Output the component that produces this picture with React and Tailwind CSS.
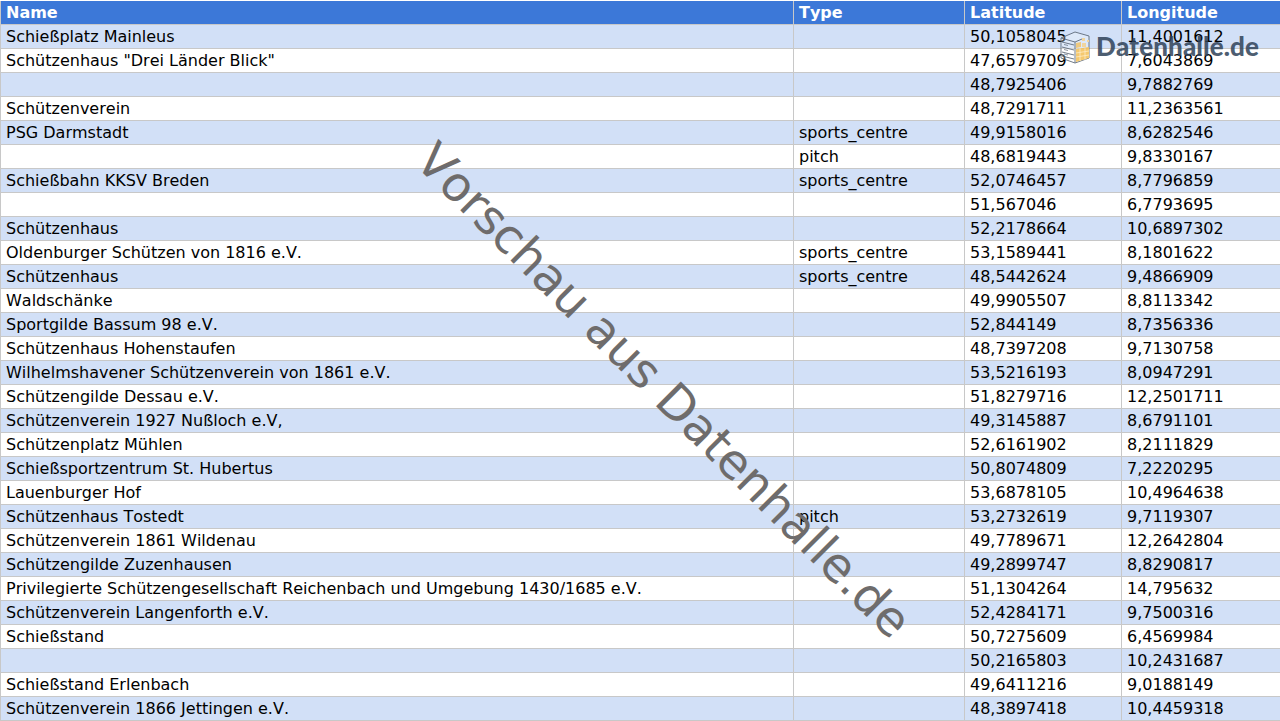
import React from 'react';

const rows = [
  ['Schießplatz Mainleus', '', '50,1058045', '11,4001612'],
  ['Schützenhaus "Drei Länder Blick"', '', '47,6579709', '7,6043869'],
  ['', '', '48,7925406', '9,7882769'],
  ['Schützenverein', '', '48,7291711', '11,2363561'],
  ['PSG Darmstadt', 'sports_centre', '49,9158016', '8,6282546'],
  ['', 'pitch', '48,6819443', '9,8330167'],
  ['Schießbahn KKSV Breden', 'sports_centre', '52,0746457', '8,7796859'],
  ['', '', '51,567046', '6,7793695'],
  ['Schützenhaus', '', '52,2178664', '10,6897302'],
  ['Oldenburger Schützen von 1816 e.V.', 'sports_centre', '53,1589441', '8,1801622'],
  ['Schützenhaus', 'sports_centre', '48,5442624', '9,4866909'],
  ['Waldschänke', '', '49,9905507', '8,8113342'],
  ['Sportgilde Bassum 98 e.V.', '', '52,844149', '8,7356336'],
  ['Schützenhaus Hohenstaufen', '', '48,7397208', '9,7130758'],
  ['Wilhelmshavener Schützenverein von 1861 e.V.', '', '53,5216193', '8,0947291'],
  ['Schützengilde Dessau e.V.', '', '51,8279716', '12,2501711'],
  ['Schützenverein 1927 Nußloch e.V,', '', '49,3145887', '8,6791101'],
  ['Schützenplatz Mühlen', '', '52,6161902', '8,2111829'],
  ['Schießsportzentrum St. Hubertus', '', '50,8074809', '7,2220295'],
  ['Lauenburger Hof', '', '53,6878105', '10,4964638'],
  ['Schützenhaus Tostedt', 'pitch', '53,2732619', '9,7119307'],
  ['Schützenverein 1861 Wildenau', '', '49,7789671', '12,2642804'],
  ['Schützengilde Zuzenhausen', '', '49,2899747', '8,8290817'],
  ['Privilegierte Schützengesellschaft Reichenbach und Umgebung 1430/1685 e.V.', '', '51,1304264', '14,795632'],
  ['Schützenverein Langenforth e.V.', '', '52,4284171', '9,7500316'],
  ['Schießstand', '', '50,7275609', '6,4569984'],
  ['', '', '50,2165803', '10,2431687'],
  ['Schießstand Erlenbach', '', '49,6411216', '9,0188149'],
  ['Schützenverein 1866 Jettingen e.V.', '', '48,3897418', '10,4459318'],
];

const grid = 'grid grid-cols-[793px_171px_157px_159px] h-6';
const cell = 'border-l border-b border-[#c8c8c8] pl-[5px] leading-[23px] whitespace-nowrap overflow-hidden';

const Logo = () => (
  <div className="absolute left-[1060px] top-[30px] flex items-center gap-[5px] opacity-85">
    <svg width="31" height="34" viewBox="0 0 31 34" fill="none">
      {/* outline of the hall */}
      <path d="M1 8 L15 2 L29 6 V28 L15 33 L1 28 Z" fill="#ffffff" fillOpacity="0.35" stroke="#5a6675" strokeWidth="1" />
      <path d="M1 8 L15 12 L22 9 M15 12 V33" stroke="#5a6675" strokeWidth="1" />
      {/* orange crates, fading out towards the top corner */}
      <path d="M16 13 L21 12 V17 L16 18 Z" fill="#f4c56c" />
      <path d="M22 8 H25 V11 H22 Z M22 13 H26 V17 H22 Z M27 10 H29 V12 H27 Z" fill="#f7d48f" />
      <path d="M16 19 L29 17 V28 L16 32 Z" fill="#f4c056" />
      <path d="M20 18 V31 M25 18 V30 M16 23 L29 21 M16 27 L29 25" stroke="#fde9bd" strokeWidth="0.8" />
      {/* shelves on the left side */}
      <path d="M2 12 L14 15 M2 17 L14 20 M2 22 L14 25 M2 26 L14 29" stroke="#5a6675" strokeWidth="1" />
      <path d="M4 14.5 L8 15.5 M4 19.5 L8 20.5 M4 24 L8 25" stroke="#5a6675" strokeWidth="0.8" />
    </svg>
    <span className="-mt-[3px] text-[26px] font-black tracking-[0.1px] leading-none text-[#2f4259] font-['Lato',sans-serif]">Datenhalle.de</span>
  </div>
);

export default function App() {
  return (
    <div className="relative w-[1280px] h-[721px] overflow-hidden bg-white pt-px text-[16px] text-black [font-kerning:none] font-['DejaVu_Sans',sans-serif]">
      <div className={`${grid} bg-[#3c78d8] font-bold text-white`}>
        {['Name', 'Type', 'Latitude', 'Longitude'].map((h) => (
          <div key={h} className={cell}>{h}</div>
        ))}
      </div>
      {rows.map((r, i) => (
        <div key={i} className={`${grid} ${i % 2 === 0 ? 'bg-[#d2e0f7]' : 'bg-white'}`}>
          {r.map((v, j) => (
            <div key={j} className={cell}>{v}</div>
          ))}
        </div>
      ))}
      <div className="absolute left-[664px] top-[390px] -translate-x-1/2 -translate-y-1/2 rotate-45 whitespace-nowrap text-[48px] leading-none text-[#6e6c6c]">
        Vorschau aus Datenhalle.de
      </div>
      <Logo />
    </div>
  );
}
